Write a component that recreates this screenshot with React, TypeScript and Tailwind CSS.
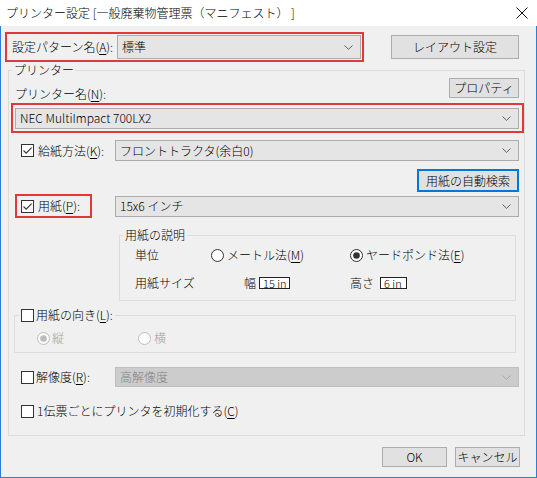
import React from "react";
import clsx from "clsx";

// Mnemonic key shown as an underlined letter in parentheses
function Key({ k }: { k: string }) {
  return (
    <>
      (<span className="underline underline-offset-[2px]">{k}</span>)
    </>
  );
}

function CheckBox({ checked, className }: { checked?: boolean; className?: string }) {
  return (
    <span
      className={clsx(
        "flex h-[13px] w-[13px] shrink-0 items-center justify-center border border-[#333333] bg-white",
        className
      )}
    >
      {checked && (
        <svg width="11" height="11" viewBox="0 0 11 11">
          <path d="M1.5 5.5 L4.2 8.2 L9.6 2.6" fill="none" stroke="#333333" strokeWidth="1.1" />
        </svg>
      )}
    </span>
  );
}

function Radio({ checked, disabled }: { checked?: boolean; disabled?: boolean }) {
  const c = disabled ? "#bcbcbc" : "#333333";
  return (
    <svg width="13" height="13" viewBox="0 0 13 13" className="shrink-0">
      <circle cx="6.5" cy="6.5" r="6" fill={disabled ? "#fcfcfc" : "#ffffff"} stroke={c} />
      {checked && <circle cx="6.5" cy="6.5" r="3.3" fill={c} />}
    </svg>
  );
}

function Chevron({ disabled }: { disabled?: boolean }) {
  return (
    <svg width="9" height="5" viewBox="0 0 9 5" className="shrink-0">
      <path d="M0.5 0.5 L4.5 4.3 L8.5 0.5" fill="none" stroke={disabled ? "#a8a8a8" : "#606060"} strokeWidth="1" />
    </svg>
  );
}

function Combo({ value, className, disabled }: { value: string; className?: string; disabled?: boolean }) {
  return (
    <div
      className={clsx(
        "flex shrink-0 items-center justify-between border pl-[4px] pr-[7px]",
        disabled ? "border-[#bfbfbf] bg-[#cccccc] text-[#838383]" : "border-[#acacac] bg-[#e5e5e5]",
        className
      )}
    >
      <span>{value}</span>
      <Chevron disabled={disabled} />
    </div>
  );
}

function Button({
  children,
  className,
  focused,
}: {
  children: React.ReactNode;
  className?: string;
  focused?: boolean;
}) {
  return (
    <div
      className={clsx(
        "flex shrink-0 items-center justify-center bg-[#e1e1e1]",
        focused ? "border-2 border-[#0078d7]" : "border border-[#adadad]",
        className
      )}
    >
      {children}
    </div>
  );
}

function SizeBox({ children, className }: { children: React.ReactNode; className?: string }) {
  return (
    <span
      className={clsx(
        "flex h-[12px] shrink-0 items-center border border-[#222222] bg-white pl-[3px] text-[11px] leading-[10px]",
        className
      )}
    >
      {children}
    </span>
  );
}

export default function App() {
  return (
    <div className="flex h-[478px] w-[537px] flex-col font-['Noto_Sans_CJK_JP','Noto_Sans',sans-serif] text-[12px] font-light leading-[14px] text-black">
      {/* title bar */}
      <div className="flex h-[26px] shrink-0 items-center justify-between bg-white pl-[6px] pr-[9px]">
        <span>プリンター設定 [一般廃棄物管理票（マニフェスト） ]</span>
        <svg width="12" height="12" viewBox="0 0 12 12">
          <path d="M0.5 0.5 L11.5 11.5 M11.5 0.5 L0.5 11.5" stroke="#111111" strokeWidth="1" />
        </svg>
      </div>

      <div className="flex flex-1 flex-col border-x border-b border-[#2b80d4] bg-[#f0f0f0]">
        {/* pattern */}
        <div className="mt-[6px] flex items-center">
          <div className="ml-[4px] flex h-[30px] w-[359px] items-center border-2 border-[#e0393b] pl-[5px]">
            <span className="w-[105px]">
              設定パターン名<Key k="A" />:
            </span>
            <Combo value="標準" className="h-[24px] w-[244px]" />
          </div>
          <Button className="ml-[27px] h-[24px] w-[128px]">レイアウト設定</Button>
        </div>

        {/* printer group */}
        <fieldset className="ml-[7px] mt-[1px] w-[517px] border border-[#dcdcdc]">
          <legend className="ml-[3px] px-[2px]">プリンター</legend>
          <div className="flex flex-col pb-[17px]">
            <div className="mt-[1px] flex items-start justify-between">
              <span className="ml-[6px] mt-[9px]">
                プリンター名<Key k="N" />:
              </span>
              <Button className="mr-[5px] h-[20px] w-[70px]">プロパティ</Button>
            </div>

            <div className="ml-[2px] mt-[2px] flex h-[30px] w-[513px] items-center border-2 border-[#e0393b] pl-[2px]">
              <Combo value="NEC MultiImpact 700LX2" className="h-[21px] w-[504px]" />
            </div>

            <div className="mt-[7px] flex h-[21px] items-center">
              <CheckBox checked className="ml-[12px]" />
              <span className="ml-[4px] w-[77px]">
                給紙方法<Key k="K" />:
              </span>
              <Combo value="フロントトラクタ(余白0)" className="h-[21px] w-[404px]" />
            </div>

            <div className="mt-[8px] flex justify-end pr-[5px]">
              <Button focused className="h-[23px] w-[102px]">
                用紙の自動検索
              </Button>
            </div>

            <div className="mt-[2px] flex h-[24px] items-center">
              <div className="ml-[6px] flex h-[24px] w-[77px] items-center border-2 border-[#e0393b] pl-[4px]">
                <CheckBox checked />
                <span className="ml-[4px]">
                  用紙<Key k="P" />:
                </span>
              </div>
              <Combo value="15x6 インチ" className="ml-[23px] h-[21px] w-[404px]" />
            </div>

            {/* paper description */}
            <fieldset className="ml-[110px] mt-[10px] w-[397px] border border-[#dcdcdc] pb-[7px]">
              <legend className="ml-[3px] px-[2px]">用紙の説明</legend>
              <div className="mt-[3px] flex h-[20px] items-center">
                <span className="ml-[15px] w-[76px]">単位</span>
                <span className="flex w-[139px] items-center gap-[3px]">
                  <Radio />
                  <span>
                    メートル法<Key k="M" />
                  </span>
                </span>
                <span className="flex items-center gap-[3px]">
                  <Radio checked />
                  <span>
                    ヤードポンド法<Key k="E" />
                  </span>
                </span>
              </div>
              <div className="mt-[8px] flex h-[20px] items-center">
                <span className="ml-[15px] w-[109px]">用紙サイズ</span>
                <span className="w-[15px]">幅</span>
                <SizeBox className="w-[31px]">15 in</SizeBox>
                <span className="ml-[60px] w-[30px]">高さ</span>
                <SizeBox className="w-[27px]">6 in</SizeBox>
              </div>
            </fieldset>

            {/* orientation */}
            <fieldset className="ml-[5px] mt-[7px] w-[502px] border border-[#dcdcdc] pb-[7px]">
              <legend className="ml-[4px] px-[2px]">
                <span className="flex items-center">
                  <CheckBox />
                  <span className="ml-[2px]">
                    用紙の向き<Key k="L" />:
                  </span>
                </span>
              </legend>
              <div className="mt-[9px] flex h-[14px] items-center text-[#a0a0a0]">
                <span className="ml-[22px] flex w-[101px] items-center gap-[2px]">
                  <Radio checked disabled />
                  <span>縦</span>
                </span>
                <span className="flex items-center gap-[3px]">
                  <Radio disabled />
                  <span>横</span>
                </span>
              </div>
            </fieldset>

            <div className="mt-[14px] flex h-[20px] items-center">
              <CheckBox className="ml-[12px]" />
              <span className="ml-[2px] w-[79px]">
                解像度<Key k="R" />:
              </span>
              <Combo value="高解像度" disabled className="h-[20px] w-[404px]" />
            </div>

            <div className="mt-[17px] flex h-[14px] items-center">
              <CheckBox className="ml-[12px]" />
              <span className="ml-[3px]">
                1伝票ごとにプリンタを初期化する<Key k="C" />
              </span>
            </div>
          </div>
        </fieldset>

        <div className="mt-[11px] flex justify-end gap-[8px] pr-[16px]">
          <Button className="h-[20px] w-[65px]">OK</Button>
          <Button className="h-[20px] w-[65px]">キャンセル</Button>
        </div>
      </div>
    </div>
  );
}
